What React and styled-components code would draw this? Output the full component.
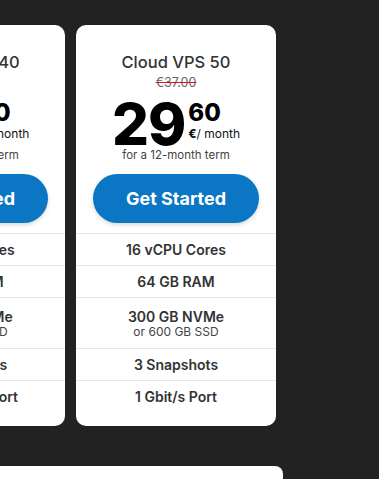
import React from 'react';
import styled, { createGlobalStyle } from 'styled-components';

const Global = createGlobalStyle`
  html, body { margin: 0; padding: 0; background: #222222; }
  body { font-family: Inter, "Noto Sans", sans-serif; overflow: hidden; }
`;

const Page = styled.div`
  width: 379px;
  height: 479px;
  overflow: hidden;
  padding-top: 25px;
  box-sizing: border-box;
`;

const Row = styled.div`
  display: flex;
  gap: 11px;
  margin-left: -135px;
`;

const Card = styled.div`
  flex: 0 0 200px;
  width: 200px;
  height: 401px;
  background: #fff;
  border-radius: 10px;
  display: flex;
  flex-direction: column;
  align-items: center;
  box-sizing: border-box;
  padding-top: 27px;
`;

const Title = styled.div`
  font-size: 16.5px;
  font-weight: 500;
  color: #333;
  line-height: 20px;
`;

const OldPrice = styled.div`
  font-size: 12.5px;
  color: #666;
  line-height: 16px;
  margin-top: 3px;
  text-decoration: line-through;
  text-decoration-color: #d11;
`;

const PriceRow = styled.div`
  display: flex;
  align-items: flex-start;
  margin-top: 8px;
  height: 46px;
`;

const Big = styled.div`
  font-size: 58px;
  font-weight: 800;
  color: #000;
  line-height: 50px;
  letter-spacing: -1px;
`;

const Side = styled.div`
  display: flex;
  flex-direction: column;
  margin-left: 3px;
  padding-top: 2px;
`;

const Cents = styled.div`
  font-size: 24px;
  font-weight: 800;
  color: #000;
  line-height: 23px;
`;

const Per = styled.div`
  font-size: 12px;
  color: #111;
  line-height: 14px;
  margin-top: 3px;
  b { font-weight: 800; }
`;

const Term = styled.div`
  font-size: 11.5px;
  color: #444;
  line-height: 14px;
  margin-top: 3px;
`;

const Button = styled.button`
  margin-top: 12px;
  width: 166px;
  height: 49px;
  border: none;
  border-radius: 25px;
  background: #0a76c4;
  color: #fff;
  font-family: inherit;
  font-size: 18px;
  font-weight: 700;
  box-shadow: 0 2px 4px rgba(0,0,0,0.15);
`;

const Features = styled.div`
  margin-top: 10px;
  width: 100%;
  border-top: 1px solid #e6e6e6;
`;

const Feature = styled.div`
  border-bottom: ${p => (p.last ? 'none' : '1px solid #e6e6e6')};
  height: ${p => (p.tall ? 50 : 31)}px;
  display: flex;
  flex-direction: column;
  align-items: center;
  justify-content: center;
  font-size: 14px;
  font-weight: 600;
  color: #333;
  small {
    font-size: 12px;
    font-weight: 400;
    color: #444;
    line-height: 13px;
  }
`;

const BottomBar = styled.div`
  margin-top: 40px;
  width: 283px;
  height: 20px;
  background: #fff;
  border-top-right-radius: 8px;
`;

const plans = [
  { name: 'Cloud VPS 40', old: '€30.00', big: '24', cents: '40', cpu: 12, ram: 48, nvme: 250, ssd: 500, snaps: 3, port: '800 Mbit/s' },
  { name: 'Cloud VPS 50', old: '€37.00', big: '29', cents: '60', cpu: 16, ram: 64, nvme: 300, ssd: 600, snaps: 3, port: '1 Gbit/s' },
];

function Plan({ p }) {
  return (
    <Card>
      <Title>{p.name}</Title>
      <OldPrice>{p.old}</OldPrice>
      <PriceRow>
        <Big>{p.big}</Big>
        <Side>
          <Cents>{p.cents}</Cents>
          <Per><b>€</b>/ month</Per>
        </Side>
      </PriceRow>
      <Term>for a 12-month term</Term>
      <Button>Get Started</Button>
      <Features>
        <Feature>{p.cpu} vCPU Cores</Feature>
        <Feature>{p.ram} GB RAM</Feature>
        <Feature tall>
          {p.nvme} GB NVMe
          <small>or {p.ssd} GB SSD</small>
        </Feature>
        <Feature>{p.snaps} Snapshots</Feature>
        <Feature last>{p.port} Port</Feature>
      </Features>
    </Card>
  );
}

export default function App() {
  return (
    <Page>
      <Global />
      <Row>
        {plans.map(p => <Plan key={p.name} p={p} />)}
      </Row>
      <BottomBar />
    </Page>
  );
}
